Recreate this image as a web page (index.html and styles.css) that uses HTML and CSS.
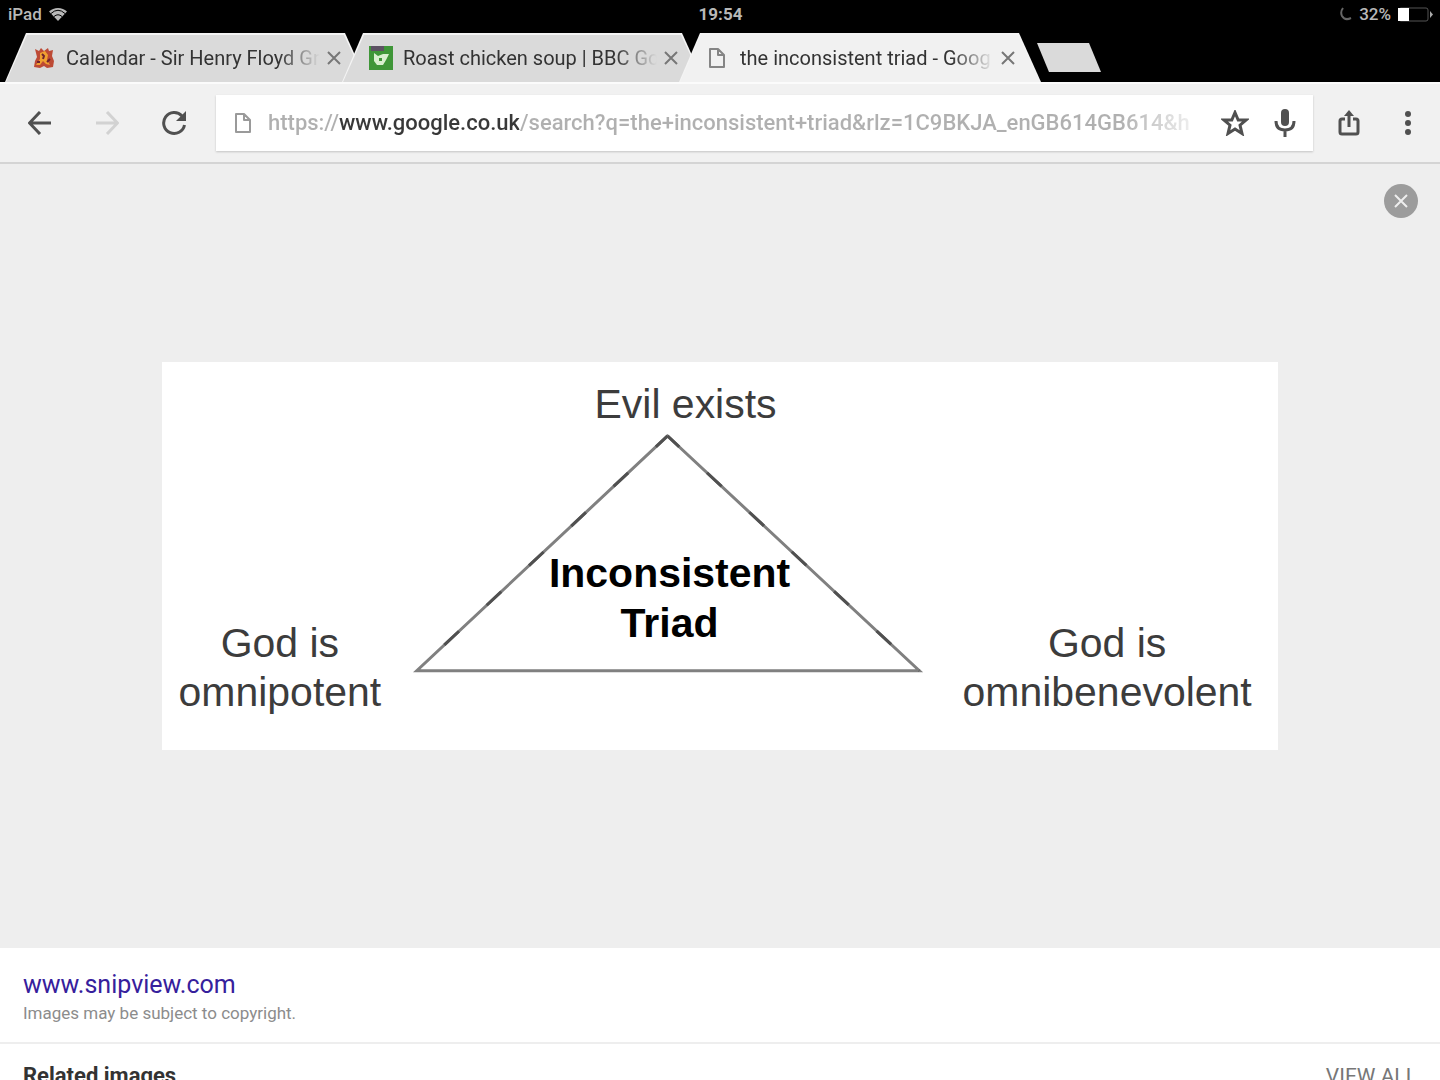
FILE: index.html
```html
<!DOCTYPE html>
<html lang="en">

<head>
    <meta charset="utf-8">
    <title>the inconsistent triad - Google Search</title>
    <link rel="stylesheet" href="styles.css">
</head>

<body>

    <header id="status-bar">
        <div class="status-left">
            <span>iPad</span>
            <svg width="18" height="14" viewBox="0 0 18 14">
                <path d="M0 4.500A13 13 0 0 1 18 4.500L9 14Z" fill="#b8b8b8"/>
                <path d="M2 6.500Q9 0 16 6.500M5 9.500Q9 6 13 9.500" fill="none" stroke="#000" stroke-width="1"/>
            </svg>
        </div>
        <time>19:54</time>
        <div class="status-right">
            <svg width="12" height="14" viewBox="0 0 12 14">
                <path d="M3 1Q0 5 2 9Q5 14 11 11" fill="none" stroke="#666" stroke-width="2"/>
            </svg>
            <span>32%</span>
            <svg width="35" height="15" viewBox="0 0 35 15">
                <rect x="1" y="1" width="29" height="13" rx="2" fill="none" stroke="#555"/>
                <rect x="0" y="1" width="11" height="13" fill="#fff"/>
                <path d="M32 4L35 7.500L32 11Z" fill="#aaa"/>
            </svg>
        </div>
    </header>

    <!-- Tabs -->
    <nav id="tabs">
        <div class="tab">
            <svg class="favicon" width="22" height="22" viewBox="0 0 22 22">
                <path d="M2 2L6 4L8 1L11 4L15 1L16 4L20 3L19 9L21 14L20 20L14 21L11 19L7 21L1 20L2 14L4 10Z" fill="#bd4a35"/>
                <path d="M7 6L12 4L15 8L14 13L17 18L13 17L10 14L7 18L3 18L7 12Z" fill="#f0a030"/>
                <path d="M9 7L11 9L10 12M14 15L17 12M4 15L7 15" stroke="#6f2430" stroke-width="2" fill="none"/>
            </svg>
            <a href="#" class="tab-title">Calendar - Sir Henry Floyd Gr</a>
            <button class="tab-close" aria-label="Close tab">
                <svg width="14" height="14" viewBox="0 0 14 14"><path d="M1 1L13 13M13 1L1 13"/></svg>
            </button>
        </div>
        <div class="tab">
            <svg class="favicon" width="24" height="24" viewBox="0 0 24 24">
                <rect width="24" height="24" fill="#3f9638"/>
                <rect x="2" width="13" height="5" fill="#5d5263"/>
                <path d="M5 7L9 10L14 8L20 8L17 14L14 19L8 19L5 15Z" fill="#d9efcf"/>
                <path d="M10 12H13V15H10Z" fill="#3f9638"/>
            </svg>
            <a href="#" class="tab-title">Roast chicken soup | BBC Go</a>
            <button class="tab-close" aria-label="Close tab">
                <svg width="14" height="14" viewBox="0 0 14 14"><path d="M1 1L13 13M13 1L1 13"/></svg>
            </button>
        </div>
        <div class="tab active">
            <svg class="favicon" width="24" height="22" viewBox="0 0 24 22">
                <path d="M4 2H12L18 8V20H4ZM12 2V8H18" fill="none" stroke="#858585" stroke-width="2" stroke-linejoin="round"/>
            </svg>
            <a href="#" class="tab-title">the inconsistent triad - Goog</a>
            <button class="tab-close" aria-label="Close tab">
                <svg width="14" height="14" viewBox="0 0 14 14"><path d="M1 1L13 13M13 1L1 13"/></svg>
            </button>
        </div>
        <button id="new-tab" aria-label="New tab"></button>
    </nav>

    <!-- Toolbar -->
    <div id="toolbar">
        <button class="nav-button" aria-label="Back">
            <svg width="24" height="24" viewBox="0 0 24 24"><path d="M23 12H2M12 1L1.500 12L12 23"/></svg>
        </button>
        <button class="nav-button" aria-label="Forward" disabled>
            <svg width="24" height="24" viewBox="0 0 24 24"><path d="M1 12H22M12 1L22.500 12L12 23"/></svg>
        </button>
        <button class="nav-button" aria-label="Reload">
            <svg width="26" height="26" viewBox="0 0 26 26">
                <path d="M21 6A10.500 10.500 0 1 0 23.500 15"/>
                <path d="M25 1V11H15Z" class="solid"/>
            </svg>
        </button>
        <form id="address">
            <svg width="16" height="20" viewBox="0 0 16 20">
                <path d="M1 1H9L15 7V19H1ZM9 1V7H15" fill="none" stroke="#9a9a9a" stroke-width="2" stroke-linejoin="round"/>
            </svg>
            <input type="text" aria-label="Address" value="https://www.google.co.uk/search?q=the+inconsistent+triad&amp;rlz=1C9BKJA_enGB614GB614&amp;h">
            <button type="button" aria-label="Bookmark">
                <svg width="28" height="26" viewBox="0 0 28 26">
                    <path d="M14 2.500L17.200 10H25L19 15.200L21 23.500L14 19L7 23.500L9 15.200L3 10H10.800Z"/>
                </svg>
            </button>
            <button type="button" aria-label="Voice search">
                <svg width="22" height="28" viewBox="0 0 22 28">
                    <rect x="7" y="0" width="8" height="17" rx="4" class="solid"/>
                    <path d="M2 12Q2 21 11 21Q20 21 20 12M11 21V28"/>
                </svg>
            </button>
        </form>
        <button class="action-button" aria-label="Share">
            <svg width="22" height="26" viewBox="0 0 22 26">
                <path d="M7 9H4Q2 9 2 11V22Q2 24 4 24H18Q20 24 20 22V11Q20 9 18 9H15M11 17V3"/>
                <path d="M6 6L11 0L16 6Z" class="solid"/>
            </svg>
        </button>
        <button class="action-button" aria-label="Menu">
            <svg width="6" height="24" viewBox="0 0 6 24">
                <circle cx="3" cy="3" r="3" class="solid"/>
                <circle cx="3" cy="12" r="3" class="solid"/>
                <circle cx="3" cy="21" r="3" class="solid"/>
            </svg>
        </button>
    </div>

    <!-- Opened image -->
    <main id="viewer">
        <button id="close-image" aria-label="Close image">
            <svg width="14" height="14" viewBox="0 0 14 14"><path d="M1 1L13 13M13 1L1 13"/></svg>
        </button>
        <svg id="triad" viewBox="0 0 1117 388" role="img">
            <path d="M506 74L255 309H758Z"/>
            <path d="M506 74L255 309M506 74L758 309" class="dashes"/>
            <text x="524" y="56">Evil exists</text>
            <text x="508" y="225" class="bold">Inconsistent</text>
            <text x="508" y="275" class="bold">Triad</text>
            <text x="118" y="295">God is</text>
            <text x="118" y="344">omnipotent</text>
            <text x="946" y="295">God is</text>
            <text x="946" y="344">omnibenevolent</text>
        </svg>
    </main>

    <section id="source">
        <a href="#">www.snipview.com</a>
        <p>Images may be subject to copyright.</p>
    </section>

    <section id="related">
        <h2>Related images</h2>
        <a href="#">VIEW ALL</a>
    </section>

</body>

</html>
```
FILE: styles.css
```css
* {
    box-sizing: border-box;
}

body {
    margin: 0;
    height: 100vh;
    overflow: hidden;
    background-color: white;
    font-family: Roboto, "Liberation Sans", sans-serif;
}

button {
    display: flex;
    align-items: center;
    justify-content: center;
    padding: 0;
    border: none;
    background: none;
    cursor: pointer;
}

a {
    text-decoration: none;
}

#status-bar {
    display: grid;
    grid-template-columns: 1fr auto 1fr;
    align-items: center;
    height: 33px;
    padding: 0 7px 5px 8px;
    background-color: black;
    color: #b8b8b8;
    font-size: 17px;
    font-weight: 500;
    line-height: 28px;
}

#status-bar time {
    font-weight: bold;
}

.status-left,
.status-right {
    display: flex;
    align-items: center;
    gap: 7px;
}

.status-right {
    justify-content: flex-end;
}

#tabs {
    display: flex;
    height: 49px;
    padding-left: 5px;
    background-color: black;
}

.tab { /* Trapezoid, the next tab lies over the end of this one */
    position: relative;
    display: flex;
    align-items: center;
    width: 362px;
    margin-right: -25px;
    padding: 0 21px 0 27px;
    background-color: #f4f4f4;
    clip-path: polygon(21px 0, calc(100% - 22px) 0, 100% 100%, 0 100%);
}

.tab::before { /* Tab face, leaves a light edge around it */
    content: "";
    position: absolute;
    inset: 2px 1px 0;
    background-color: #dadada;
    clip-path: polygon(21px 0, calc(100% - 22px) 0, 100% 100%, 0 100%);
}

.tab.active::before {
    background-color: #f1f1f1;
}

.favicon {
    position: relative;
    flex: none;
    width: 24px;
}

.tab-title {
    position: relative;
    flex: 1;
    margin: 0 0 0 10px;
    color: #333;
    font-size: 20px;
    line-height: 30px;
    white-space: nowrap;
    -webkit-mask-image: linear-gradient(to right, black 212px, transparent 254px);
    mask-image: linear-gradient(to right, black 212px, transparent 254px);
}

.tab-close {
    position: relative;
    width: 24px;
    height: 30px;
}

.tab-close path {
    stroke: #777;
    stroke-width: 2;
}

#new-tab {
    width: 64px;
    height: 29px;
    margin: 10px 0 0 21px;
    background-color: #dadada;
    clip-path: polygon(0 0, 52px 0, 100% 100%, 12px 100%);
}

#toolbar {
    display: flex;
    align-items: center;
    height: 82px;
    padding: 0 3px 0 6px;
    border-top: 2px solid #fbfbfb;
    border-bottom: 2px solid #d4d4d4;
    background-color: #f1f1f1;
}

#toolbar button path {
    fill: none;
    stroke: #505050;
    stroke-width: 3;
}

#toolbar button .solid {
    fill: #505050;
    stroke: none;
}

#toolbar .nav-button {
    width: 67px;
    height: 56px;
}

#toolbar .nav-button:disabled path {
    stroke: #d2d2d2;
}

#toolbar .action-button {
    width: 59px;
    height: 56px;
}

#address {
    display: flex;
    flex: 1;
    align-items: center;
    height: 56px;
    margin: 0 6px 0 9px;
    padding: 0 3px 0 19px;
    background-color: white;
    box-shadow: 0 1px 2px #c4c4c4;
}

#address input { /* Dark host name, the rest is grey and fades out */
    flex: 1;
    min-width: 0;
    margin-left: 17px;
    padding: 0;
    border: none;
    outline: none;
    background: linear-gradient(to right, #b0b0b0 71px, #383838 71px, #383838 251px, #b0b0b0 251px, #b0b0b0 calc(100% - 90px), transparent);
    -webkit-background-clip: text;
    background-clip: text;
    color: transparent;
    font-family: inherit;
    font-size: 22px;
    font-weight: 500;
    line-height: 32px;
}

#address button {
    width: 50px;
    height: 56px;
}

#viewer {
    position: relative;
    padding: 198px 162px;
    background-color: #eee;
}

#close-image {
    position: absolute;
    top: 20px;
    right: 22px;
    width: 34px;
    height: 34px;
    border-radius: 50%;
    background-color: #9c9c9c;
}

#close-image path {
    stroke: #eee;
    stroke-width: 2;
}

#triad {
    display: block;
    width: 100%;
    background-color: white;
}

#triad path {
    fill: none;
    stroke: #808080;
    stroke-width: 3;
}

#triad .dashes { /* Darker pieces of the slanted sides */
    stroke: #505050;
    stroke-dasharray: 20 38;
    stroke-dashoffset: 4;
}

#triad text {
    fill: #3c3c3c;
    font-family: "Liberation Sans", Arial, sans-serif;
    font-size: 41px;
    text-anchor: middle;
}

#triad .bold {
    fill: black;
    font-weight: bold;
}

#source {
    padding: 21px 23px 17px;
    border-bottom: 2px solid #eee;
}

#source a {
    display: block;
    color: #36209c;
    font-size: 25px;
    line-height: 32px;
}

#source p {
    margin: 0;
    color: #8c8c8c;
    font-size: 17px;
    line-height: 24px;
}

#related {
    display: flex;
    justify-content: space-between;
    padding: 16px 23px;
    line-height: 32px;
}

#related h2 {
    margin: 0;
    color: #333;
    font-size: 22px;
}

#related a {
    color: #777;
    font-size: 21px;
}
```
